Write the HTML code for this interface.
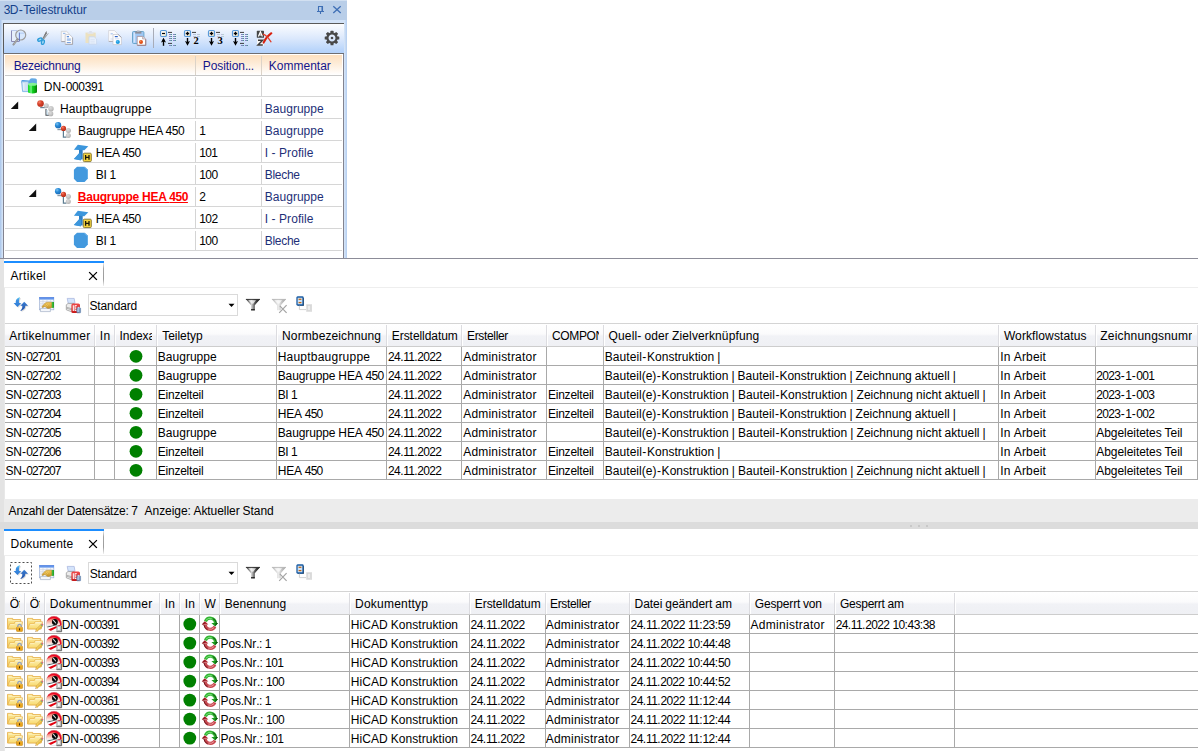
<!DOCTYPE html>
<html><head><meta charset="utf-8"><title>HiCAD</title>
<style>
html,body{margin:0;padding:0}
body{width:1198px;height:751px;position:relative;overflow:hidden;background:#fff;font-family:"Liberation Sans",sans-serif;font-size:12px;color:#000}
.r{position:absolute;display:block}
.t{position:absolute;display:block;white-space:pre;line-height:16px;height:16px;font-size:12px}
svg{position:absolute;display:block;overflow:visible}
.t i{font-style:normal}

</style></head>
<body>
<div class="r" style="left:0px;top:0px;width:347px;height:258px;background:#d3e3f8;"></div>
<div class="r" style="left:0px;top:0px;width:347px;height:20px;background:#b9cee8;"></div>
<div class="r" style="left:0px;top:0px;width:347px;height:1px;background:#d2e0f1;"></div>
<div class="r" style="left:0px;top:20px;width:3px;height:238px;background:linear-gradient(90deg,#a9c5ea,#d9e7f8);"></div>
<div class="r" style="left:344px;top:20px;width:3px;height:238px;background:linear-gradient(90deg,#d9e7f8,#b3cdf0);"></div>
<div class="r" style="left:3px;top:23px;width:341px;height:31px;background:linear-gradient(180deg,#ffffff 0%,#f4f8fe 15%,#dbe8fc 50%,#b7d4fb 90%,#b3d1fa 100%);"></div>
<div class="r" style="left:3px;top:23px;width:341px;height:1px;background:#5a5a5a;"></div>
<div class="r" style="left:3px;top:23px;width:1px;height:31px;background:#5a5a5a;"></div>
<div class="r" style="left:3px;top:53px;width:341px;height:1px;background:#6e6e72;"></div>
<div class="r" style="left:3px;top:54px;width:341px;height:204px;background:#ffffff;"></div>
<div class="r" style="left:3px;top:54px;width:1px;height:204px;background:#83838f;"></div>
<div class="r" style="left:343px;top:54px;width:1px;height:204px;background:#83838f;"></div>
<div class="r" style="left:5px;top:55px;width:337px;height:20px;background:linear-gradient(180deg,#fde0c0 0%,#fdebd6 40%,#fffaf5 85%,#ffffff 100%);"></div>
<div class="r" style="left:5px;top:75px;width:337px;height:1px;background:#c9c9c9;"></div>
<div class="r" style="left:5px;top:96px;width:337px;height:1px;background:#d6d6d6;"></div>
<div class="r" style="left:5px;top:118px;width:337px;height:1px;background:#d6d6d6;"></div>
<div class="r" style="left:5px;top:140px;width:337px;height:1px;background:#d6d6d6;"></div>
<div class="r" style="left:5px;top:162px;width:337px;height:1px;background:#d6d6d6;"></div>
<div class="r" style="left:5px;top:184px;width:337px;height:1px;background:#d6d6d6;"></div>
<div class="r" style="left:5px;top:206px;width:337px;height:1px;background:#d6d6d6;"></div>
<div class="r" style="left:5px;top:228px;width:337px;height:1px;background:#d6d6d6;"></div>
<div class="r" style="left:5px;top:250px;width:337px;height:1px;background:#d6d6d6;"></div>
<div class="r" style="left:195px;top:56px;width:1px;height:19px;background:#dcd3c8;"></div>
<div class="r" style="left:195px;top:77px;width:1px;height:19px;background:#d4d4d4;"></div>
<div class="r" style="left:195px;top:99px;width:1px;height:19px;background:#d4d4d4;"></div>
<div class="r" style="left:195px;top:121px;width:1px;height:19px;background:#d4d4d4;"></div>
<div class="r" style="left:195px;top:143px;width:1px;height:19px;background:#d4d4d4;"></div>
<div class="r" style="left:195px;top:165px;width:1px;height:19px;background:#d4d4d4;"></div>
<div class="r" style="left:195px;top:187px;width:1px;height:19px;background:#d4d4d4;"></div>
<div class="r" style="left:195px;top:209px;width:1px;height:19px;background:#d4d4d4;"></div>
<div class="r" style="left:195px;top:231px;width:1px;height:19px;background:#d4d4d4;"></div>
<div class="r" style="left:261px;top:56px;width:1px;height:19px;background:#dcd3c8;"></div>
<div class="r" style="left:261px;top:77px;width:1px;height:19px;background:#d4d4d4;"></div>
<div class="r" style="left:261px;top:99px;width:1px;height:19px;background:#d4d4d4;"></div>
<div class="r" style="left:261px;top:121px;width:1px;height:19px;background:#d4d4d4;"></div>
<div class="r" style="left:261px;top:143px;width:1px;height:19px;background:#d4d4d4;"></div>
<div class="r" style="left:261px;top:165px;width:1px;height:19px;background:#d4d4d4;"></div>
<div class="r" style="left:261px;top:187px;width:1px;height:19px;background:#d4d4d4;"></div>
<div class="r" style="left:261px;top:209px;width:1px;height:19px;background:#d4d4d4;"></div>
<div class="r" style="left:261px;top:231px;width:1px;height:19px;background:#d4d4d4;"></div>
<div class="r" style="left:0px;top:258px;width:1198px;height:1px;background:#8c8c98;"></div>
<div class="r" style="left:0px;top:259px;width:4px;height:492px;background:#e3e3e3;"></div>
<div class="r" style="left:4px;top:288px;width:1px;height:211px;background:#e8e8e8;"></div>
<div class="r" style="left:4px;top:556px;width:1px;height:195px;background:#e8e8e8;"></div>
<div class="r" style="left:4px;top:261px;width:100px;height:2px;background:#1c8dff;"></div>
<div class="r" style="left:103px;top:263px;width:1px;height:23px;background:linear-gradient(180deg,#e8e8e8 0%,#a4a4a4 25%,#9c9c9c 70%,#f0f0f0 100%);"></div>
<div class="r" style="left:4px;top:287px;width:1194px;height:1px;background:#eeeeee;"></div>
<div class="r" style="left:88px;top:294px;width:150px;height:22px;background:#fff;box-sizing:border-box;border:1px solid #dadada"></div>
<div class="r" style="left:5px;top:324px;width:1193px;height:22px;background:linear-gradient(180deg,#ffffff 0%,#fbfbfc 45%,#f1f2f6 55%,#eff0f4 100%);"></div>
<div class="r" style="left:5px;top:323px;width:1193px;height:1px;background:#d4d4d4;"></div>
<div class="r" style="left:5px;top:346px;width:1193px;height:1px;background:#cdcdcd;"></div>
<div class="r" style="left:94px;top:325px;width:1px;height:21px;background:#dcdce0;"></div>
<div class="r" style="left:95px;top:325px;width:1px;height:21px;background:#ffffff;"></div>
<div class="r" style="left:114px;top:325px;width:1px;height:21px;background:#dcdce0;"></div>
<div class="r" style="left:115px;top:325px;width:1px;height:21px;background:#ffffff;"></div>
<div class="r" style="left:156px;top:325px;width:1px;height:21px;background:#dcdce0;"></div>
<div class="r" style="left:157px;top:325px;width:1px;height:21px;background:#ffffff;"></div>
<div class="r" style="left:276px;top:325px;width:1px;height:21px;background:#dcdce0;"></div>
<div class="r" style="left:277px;top:325px;width:1px;height:21px;background:#ffffff;"></div>
<div class="r" style="left:386px;top:325px;width:1px;height:21px;background:#dcdce0;"></div>
<div class="r" style="left:387px;top:325px;width:1px;height:21px;background:#ffffff;"></div>
<div class="r" style="left:461px;top:325px;width:1px;height:21px;background:#dcdce0;"></div>
<div class="r" style="left:462px;top:325px;width:1px;height:21px;background:#ffffff;"></div>
<div class="r" style="left:546px;top:325px;width:1px;height:21px;background:#dcdce0;"></div>
<div class="r" style="left:547px;top:325px;width:1px;height:21px;background:#ffffff;"></div>
<div class="r" style="left:603px;top:325px;width:1px;height:21px;background:#dcdce0;"></div>
<div class="r" style="left:604px;top:325px;width:1px;height:21px;background:#ffffff;"></div>
<div class="r" style="left:998px;top:325px;width:1px;height:21px;background:#dcdce0;"></div>
<div class="r" style="left:999px;top:325px;width:1px;height:21px;background:#ffffff;"></div>
<div class="r" style="left:1095px;top:325px;width:1px;height:21px;background:#dcdce0;"></div>
<div class="r" style="left:1096px;top:325px;width:1px;height:21px;background:#ffffff;"></div>
<div class="r" style="left:1197px;top:325px;width:1px;height:21px;background:#dcdce0;"></div>
<div class="r" style="left:1198px;top:325px;width:1px;height:21px;background:#ffffff;"></div>
<div class="r" style="left:5px;top:365px;width:1193px;height:1px;background:#a9a9a9;"></div>
<div class="r" style="left:5px;top:384px;width:1193px;height:1px;background:#a9a9a9;"></div>
<div class="r" style="left:5px;top:403px;width:1193px;height:1px;background:#a9a9a9;"></div>
<div class="r" style="left:5px;top:422px;width:1193px;height:1px;background:#a9a9a9;"></div>
<div class="r" style="left:5px;top:441px;width:1193px;height:1px;background:#a9a9a9;"></div>
<div class="r" style="left:5px;top:460px;width:1193px;height:1px;background:#a9a9a9;"></div>
<div class="r" style="left:5px;top:479px;width:1193px;height:1px;background:#a9a9a9;"></div>
<div class="r" style="left:94px;top:347px;width:1px;height:133px;background:#a9a9a9;"></div>
<div class="r" style="left:114px;top:347px;width:1px;height:133px;background:#a9a9a9;"></div>
<div class="r" style="left:156px;top:347px;width:1px;height:133px;background:#a9a9a9;"></div>
<div class="r" style="left:276px;top:347px;width:1px;height:133px;background:#a9a9a9;"></div>
<div class="r" style="left:386px;top:347px;width:1px;height:133px;background:#a9a9a9;"></div>
<div class="r" style="left:461px;top:347px;width:1px;height:133px;background:#a9a9a9;"></div>
<div class="r" style="left:546px;top:347px;width:1px;height:133px;background:#a9a9a9;"></div>
<div class="r" style="left:603px;top:347px;width:1px;height:133px;background:#a9a9a9;"></div>
<div class="r" style="left:998px;top:347px;width:1px;height:133px;background:#a9a9a9;"></div>
<div class="r" style="left:1095px;top:347px;width:1px;height:133px;background:#a9a9a9;"></div>
<div class="r" style="left:1197px;top:347px;width:1px;height:133px;background:#a9a9a9;"></div>
<div class="r" style="left:4px;top:499px;width:1194px;height:23px;background:#ececec;"></div>
<div class="r" style="left:0px;top:522px;width:1198px;height:7px;background:#dcdcdc;"></div>
<div class="r" style="left:910px;top:524.5px;width:2px;height:2px;background:#c2c2c2;border-radius:1px"></div>
<div class="r" style="left:918px;top:524.5px;width:2px;height:2px;background:#c2c2c2;border-radius:1px"></div>
<div class="r" style="left:926px;top:524.5px;width:2px;height:2px;background:#c2c2c2;border-radius:1px"></div>
<div class="r" style="left:4px;top:529px;width:100px;height:2px;background:#1c8dff;"></div>
<div class="r" style="left:103px;top:531px;width:1px;height:23px;background:linear-gradient(180deg,#e8e8e8 0%,#a4a4a4 25%,#9c9c9c 70%,#f0f0f0 100%);"></div>
<div class="r" style="left:4px;top:555px;width:1194px;height:1px;background:#eeeeee;"></div>
<div class="r" style="left:88px;top:562px;width:150px;height:22px;background:#fff;box-sizing:border-box;border:1px solid #dadada"></div>
<div class="r" style="left:5px;top:592px;width:1193px;height:22px;background:linear-gradient(180deg,#ffffff 0%,#fbfbfc 45%,#f1f2f6 55%,#eff0f4 100%);"></div>
<div class="r" style="left:5px;top:591px;width:1193px;height:1px;background:#d4d4d4;"></div>
<div class="r" style="left:5px;top:614px;width:1193px;height:1px;background:#cdcdcd;"></div>
<div class="r" style="left:24px;top:593px;width:1px;height:21px;background:#dcdce0;"></div>
<div class="r" style="left:25px;top:593px;width:1px;height:21px;background:#ffffff;"></div>
<div class="r" style="left:44px;top:593px;width:1px;height:21px;background:#dcdce0;"></div>
<div class="r" style="left:45px;top:593px;width:1px;height:21px;background:#ffffff;"></div>
<div class="r" style="left:159px;top:593px;width:1px;height:21px;background:#dcdce0;"></div>
<div class="r" style="left:160px;top:593px;width:1px;height:21px;background:#ffffff;"></div>
<div class="r" style="left:179px;top:593px;width:1px;height:21px;background:#dcdce0;"></div>
<div class="r" style="left:180px;top:593px;width:1px;height:21px;background:#ffffff;"></div>
<div class="r" style="left:199px;top:593px;width:1px;height:21px;background:#dcdce0;"></div>
<div class="r" style="left:200px;top:593px;width:1px;height:21px;background:#ffffff;"></div>
<div class="r" style="left:219px;top:593px;width:1px;height:21px;background:#dcdce0;"></div>
<div class="r" style="left:220px;top:593px;width:1px;height:21px;background:#ffffff;"></div>
<div class="r" style="left:349px;top:593px;width:1px;height:21px;background:#dcdce0;"></div>
<div class="r" style="left:350px;top:593px;width:1px;height:21px;background:#ffffff;"></div>
<div class="r" style="left:469px;top:593px;width:1px;height:21px;background:#dcdce0;"></div>
<div class="r" style="left:470px;top:593px;width:1px;height:21px;background:#ffffff;"></div>
<div class="r" style="left:545px;top:593px;width:1px;height:21px;background:#dcdce0;"></div>
<div class="r" style="left:546px;top:593px;width:1px;height:21px;background:#ffffff;"></div>
<div class="r" style="left:629px;top:593px;width:1px;height:21px;background:#dcdce0;"></div>
<div class="r" style="left:630px;top:593px;width:1px;height:21px;background:#ffffff;"></div>
<div class="r" style="left:749px;top:593px;width:1px;height:21px;background:#dcdce0;"></div>
<div class="r" style="left:750px;top:593px;width:1px;height:21px;background:#ffffff;"></div>
<div class="r" style="left:834px;top:593px;width:1px;height:21px;background:#dcdce0;"></div>
<div class="r" style="left:835px;top:593px;width:1px;height:21px;background:#ffffff;"></div>
<div class="r" style="left:954px;top:593px;width:1px;height:21px;background:#dcdce0;"></div>
<div class="r" style="left:955px;top:593px;width:1px;height:21px;background:#ffffff;"></div>
<div class="r" style="left:5px;top:633px;width:1193px;height:1px;background:#a9a9a9;"></div>
<div class="r" style="left:5px;top:652px;width:1193px;height:1px;background:#a9a9a9;"></div>
<div class="r" style="left:5px;top:671px;width:1193px;height:1px;background:#a9a9a9;"></div>
<div class="r" style="left:5px;top:690px;width:1193px;height:1px;background:#a9a9a9;"></div>
<div class="r" style="left:5px;top:709px;width:1193px;height:1px;background:#a9a9a9;"></div>
<div class="r" style="left:5px;top:728px;width:1193px;height:1px;background:#a9a9a9;"></div>
<div class="r" style="left:5px;top:747px;width:1193px;height:1px;background:#a9a9a9;"></div>
<div class="r" style="left:24px;top:615px;width:1px;height:133px;background:#a9a9a9;"></div>
<div class="r" style="left:44px;top:615px;width:1px;height:133px;background:#a9a9a9;"></div>
<div class="r" style="left:159px;top:615px;width:1px;height:133px;background:#a9a9a9;"></div>
<div class="r" style="left:179px;top:615px;width:1px;height:133px;background:#a9a9a9;"></div>
<div class="r" style="left:199px;top:615px;width:1px;height:133px;background:#a9a9a9;"></div>
<div class="r" style="left:219px;top:615px;width:1px;height:133px;background:#a9a9a9;"></div>
<div class="r" style="left:349px;top:615px;width:1px;height:133px;background:#a9a9a9;"></div>
<div class="r" style="left:469px;top:615px;width:1px;height:133px;background:#a9a9a9;"></div>
<div class="r" style="left:545px;top:615px;width:1px;height:133px;background:#a9a9a9;"></div>
<div class="r" style="left:629px;top:615px;width:1px;height:133px;background:#a9a9a9;"></div>
<div class="r" style="left:749px;top:615px;width:1px;height:133px;background:#a9a9a9;"></div>
<div class="r" style="left:834px;top:615px;width:1px;height:133px;background:#a9a9a9;"></div>
<div class="r" style="left:954px;top:615px;width:1px;height:133px;background:#a9a9a9;"></div>
<svg width="1198" height="751" viewBox="0 0 1198 751" style="left:0;top:0"><defs>
<radialGradient id="gRed" cx="35%" cy="30%" r="70%"><stop offset="0" stop-color="#f4806a"/><stop offset=".45" stop-color="#d9442c"/><stop offset="1" stop-color="#b8301c"/></radialGradient>
<radialGradient id="gBlu" cx="35%" cy="30%" r="70%"><stop offset="0" stop-color="#7cc4f4"/><stop offset=".45" stop-color="#2a8cd8"/><stop offset="1" stop-color="#1a6cb8"/></radialGradient>
<radialGradient id="gGry" cx="40%" cy="35%" r="70%"><stop offset="0" stop-color="#dcdcdc"/><stop offset=".6" stop-color="#c4c4c4"/><stop offset="1" stop-color="#a8a8a8"/></radialGradient>
<linearGradient id="gCyl" x1="0" x2="1" y1="0" y2="0"><stop offset="0" stop-color="#22cc30"/><stop offset=".12" stop-color="#18e62c"/><stop offset=".36" stop-color="#7df08c"/><stop offset=".46" stop-color="#12d824"/><stop offset=".75" stop-color="#08ae10"/><stop offset="1" stop-color="#087808"/></linearGradient>
<linearGradient id="gFold" x1="0" x2="0" y1="0" y2="1"><stop offset="0" stop-color="#fdf1b4"/><stop offset="1" stop-color="#f8d96e"/></linearGradient>
<linearGradient id="gFoldB" x1="0" x2="0" y1="0" y2="1"><stop offset="0" stop-color="#fbe690"/><stop offset="1" stop-color="#f5cf62"/></linearGradient>
<linearGradient id="gFun" x1="0" x2="1" y1="0" y2="0"><stop offset="0" stop-color="#2a2a2a"/><stop offset=".4" stop-color="#d0d0d0"/><stop offset=".62" stop-color="#5a5a5a"/><stop offset="1" stop-color="#080808"/></linearGradient>
<linearGradient id="gFunG" x1="0" x2="1" y1="0" y2="0"><stop offset="0" stop-color="#b4b4b4"/><stop offset=".45" stop-color="#ececec"/><stop offset=".7" stop-color="#c4c4c4"/><stop offset="1" stop-color="#a0a0a0"/></linearGradient>
<linearGradient id="gHic" x1="0" x2="1" y1="0" y2="1"><stop offset="0" stop-color="#ff2a2a"/><stop offset=".35" stop-color="#f0191c"/><stop offset=".6" stop-color="#fbd0d0"/><stop offset=".8" stop-color="#ffffff"/><stop offset="1" stop-color="#e01018"/></linearGradient>

<g id="icDb">
<path d="M8 2.4 L9.4 0.7 Q9.9 0.2 10.8 0.2 L14.4 0.5 Q15.8 0.7 15.9 2 L15.9 6 L8 6 Z" fill="#62a8e4"/>
<path d="M0.3 3 Q0.4 2 1.6 2 L8.2 2.4 L8.2 5 L0.6 5 Z" fill="#4c9be2"/>
<path d="M0.6 3.6 L7.4 3.6 L7.4 13.6 L1.6 13.6 Z" fill="#cfe2f3" stroke="#7eb6e8" stroke-width="0.9"/>
<rect x="2.2" y="5" width="1.2" height="7" fill="#e6f0fa"/>
<path d="M7 6 L16 6 L16 14.6 Q11.5 16.6 7 14.6 Z" fill="url(#gCyl)"/>
<ellipse cx="11.5" cy="6.2" rx="4.5" ry="1.5" fill="#84f394"/>
</g>
<g id="icAsmM">
<path d="M3.2 7.6 H8.6" stroke="#6c8698" stroke-width="1.2" fill="none"/>
<path d="M9 9 V15.3 H12" stroke="#4a4f55" stroke-width="1.1" fill="none"/>
<path d="M10 10 V14.4 H12" stroke="#b4d2e4" stroke-width="1" fill="none"/>
<circle cx="9.3" cy="5.7" r="2.5" fill="url(#gGry)"/>
<circle cx="14" cy="8.7" r="2.7" fill="url(#gGry)"/>
<circle cx="13.7" cy="13.7" r="2.6" fill="url(#gGry)"/>
<circle cx="3.5" cy="3.5" r="3.35" fill="url(#gRed)"/>
</g>
<g id="icAsmS">
<path d="M2.4 7.5 H6.6" stroke="#8a9aa6" stroke-width="1.4" fill="none"/>
<path d="M8.4 9 V15.2 H11.4" stroke="#5e7e92" stroke-width="1.2" fill="none"/>
<circle cx="13.4" cy="8.4" r="2.5" fill="url(#gGry)"/>
<circle cx="13.3" cy="13.6" r="2.5" fill="url(#gGry)"/>
<circle cx="3.1" cy="3.2" r="3.15" fill="url(#gBlu)"/>
<circle cx="8.5" cy="6.4" r="2.6" fill="url(#gRed)"/>
</g>
<g id="icBeam">
<path d="M4.8 0.3 L15.3 1.9 L11.3 5.8 L0.9 5.3 Z" fill="#3c96dc"/>
<path d="M6 5.4 L9.7 5.6 L9.7 15 L6 15 Z" fill="#2f80c6"/>
<path d="M6.2 8.6 L6.2 15.6 L0.9 14.6 Z" fill="#3c96dc"/>
<path d="M0.9 14.6 L6.2 9.2 L8 9.2 L8 16 Z" fill="#3c96dc"/>
<rect x="10.3" y="8.8" width="8" height="8.4" rx="1" fill="#f2d23c" stroke="#8c7c36" stroke-width="1"/>
<path d="M12.6 10.7 V15.3 M16 10.7 V15.3 M12.6 13 H16" stroke="#1a1608" stroke-width="1.3" fill="none"/>
</g>
<g id="icSheet">
<path d="M4 0.7 L11.6 0.7 L14.9 3.8 L14.9 12.6 L11.6 15.9 L4 15.9 L0.9 12.8 L0.9 3.8 Z" fill="#4399de"/>
<path d="M11.6 0.7 L14.9 3.8 L14.9 12.6 L14 12.6 L14 4.2 L11 1.4Z" fill="#66aee8"/>
</g>
<g id="icTri"><path d="M7.8 0.2 L7.8 7.6 L0.4 7.6 Z" fill="#101010"/></g>

<linearGradient id="gDash" x1="0" x2="1" y1="0" y2="0"><stop offset="0" stop-color="#8e7ccc"/><stop offset=".5" stop-color="#7a8ab8"/><stop offset="1" stop-color="#3f9a84"/></linearGradient>
<linearGradient id="gDashF" x1="0" x2="1" y1="0" y2="0"><stop offset="0" stop-color="#c4bce4"/><stop offset="1" stop-color="#b4d4cc"/></linearGradient>
<linearGradient id="gBox" x1="0" x2="1" y1="0" y2="1"><stop offset="0" stop-color="#ffffff"/><stop offset=".7" stop-color="#f4f0e4"/><stop offset="1" stop-color="#e8dc70"/></linearGradient>

<g id="tbMag">
<path d="M0.4 0.4 H9 V11.4 H0.4 Z" fill="#e6effc" stroke="none"/>
<path d="M0.5 0.3 V11.5 H8.6" fill="none" stroke="#8a8ab4" stroke-width="1"/>
<path d="M0.5 0.5 H6" fill="none" stroke="#b8c8ec" stroke-width="1"/>
<circle cx="9.7" cy="5" r="5" fill="#d6e8fd" fill-opacity=".85" stroke="#9c9c9c" stroke-width="1.2"/>
<path d="M8.4 2.6 V11" stroke="#5468c0" stroke-width=".9" fill="none"/>
<path d="M8.9 3.2 H13" stroke="#a8c4f0" stroke-width=".8" fill="none"/>
<path d="M6.4 9.4 L2.4 14.6" stroke="#8c8c8c" stroke-width="1.9" stroke-linecap="round" fill="none"/>
<path d="M6.2 9.8 L2.6 14.4" stroke="#c4c4c4" stroke-width=".7" fill="none"/>
</g>
<g id="tbSci">
<path d="M10.3 0.2 L6 8 L7.1 8.7 L10.9 2.2 Z" fill="#808080"/>
<path d="M13 2 L7.6 9 L6.6 8 L11.8 2.4 Z" fill="#9c9c9c"/>
<path d="M10.5 0.5 L8.6 4.6" stroke="#6e6e6e" stroke-width=".6"/>
<ellipse cx="3.9" cy="8.6" rx="2.3" ry="1.4" transform="rotate(-22 3.9 8.6)" fill="#a8daf4" stroke="#2a9ad8" stroke-width="1.25"/>
<ellipse cx="6.9" cy="11.2" rx="1.4" ry="2.3" transform="rotate(14 6.9 11.2)" fill="#a8daf4" stroke="#2a9ad8" stroke-width="1.25"/>
</g>
<g id="tbCopy">
<path d="M0.3 0.3 H5.6 L8.2 2.8 V10.5 H0.3 Z" fill="#f7f7f9" stroke="#c8c8cc" stroke-width=".7"/>
<path d="M0.3 10.6 H8" stroke="#a4a4ac" stroke-width="1"/>
<path d="M2 2.4 H4.4" stroke="#8fb3e6" stroke-width="1"/>
<path d="M4.2 3.6 H8.6 L11.4 6.2 V13.3 H4.2 Z" fill="#fdfdfd" stroke="#bcbcc4" stroke-width=".7"/>
<path d="M4.4 13.4 H11.6 V6.6" stroke="#a8a8b0" stroke-width="1" fill="none"/>
<path d="M5.8 5.7 H8" stroke="#3e78d0" stroke-width="1.1"/>
<rect x="5.8" y="7.3" width="4" height="2.6" fill="#a9c5ee"/>
<path d="M5.8 11.6 H9.8" stroke="#6c98dc" stroke-width="1"/>
</g>
<g id="tbPasteD">
<rect x="0.5" y="1.6" width="10.2" height="10.4" fill="#ece1c0"/>
<path d="M2.6 1 H8.4 V2.8 H2.6 Z" fill="#e2e6ee"/>
<path d="M4.2 0.2 H6.8 V1.4 H4.2 Z" fill="#d8dce8"/>
<path d="M4 5.8 H9.2 L11.6 8 V13.3 H4 Z" fill="#e8f0fb" stroke="#c6d6ee" stroke-width=".8"/>
<path d="M5.4 8.4 H9.8 M5.4 10.2 H9.8 M5.4 12 H9.8" stroke="#d4e0f2" stroke-width=".7"/>
</g>
<g id="tbCopyB">
<path d="M0.6 0.5 H6.4 L9.2 3.2 V11.3 H0.6 Z" fill="#fafafc" stroke="#d0d0d6" stroke-width=".7"/>
<path d="M0.8 11.5 H5" stroke="#b0b0b8" stroke-width="1"/>
<path d="M2.6 3.8 H4.8" stroke="#a8c4ec" stroke-width="1.2"/>
<path d="M2.6 9 H4.8" stroke="#c8d8f0" stroke-width=".8"/>
<path d="M5 4.5 H10.2 L13.4 7.4 V14.6 H5 Z" fill="#ffffff" stroke="#c4c4cc" stroke-width=".7"/>
<path d="M10.2 4.5 L13.4 7.4" stroke="#a0a0a8" stroke-width="1"/>
<path d="M6.8 6.6 H9.8" stroke="#2f62c4" stroke-width="1.2"/>
<path d="M6.8 8.8 H11.4" stroke="#c0d4f0" stroke-width=".8"/>
<circle cx="9.8" cy="12" r="2.1" fill="#1c9ae0"/>
<circle cx="9.3" cy="11.4" r=".9" fill="#54bcf0"/>
</g>
<g id="tbPasteS">
<rect x="0.5" y="1.5" width="11.4" height="12" rx="1" fill="#a0c8f6" stroke="#6aa6cc" stroke-width="1"/>
<rect x="1.6" y="2.6" width="1.6" height="10" fill="#d4e6fb"/>
<path d="M3.2 1.4 H9.4 V3.6 H3.2 Z" fill="#8e8e98"/>
<path d="M5 0.2 H7.6 V1.6 H5 Z" fill="#c8c8d0"/>
<path d="M5.2 6.4 H10.6 L13.6 9 V15.2 H5.2 Z" fill="#ffffff" stroke="#a88c90" stroke-width=".8"/>
<path d="M5.4 15.4 H13.8 V9.4" stroke="#9c848c" stroke-width="1" fill="none"/>
<path d="M10.6 6.4 V9 H13.6" fill="#e8dcdc" stroke="#a88c90" stroke-width=".6"/>
<circle cx="9" cy="11.9" r="2" fill="#e2521a"/>
<circle cx="8.5" cy="11.3" r=".8" fill="#f58a50"/>
</g>
<g id="tbColl"><rect x="0.5" y="0.5" width="6" height="6" rx="1.2" fill="url(#gBox)" stroke="#5a9ada" stroke-width="1.2"/><path d="M2 3.5 H5" stroke="#000" stroke-width="1.2"/><path d="M3.5 15.8 V9.5" stroke="#000" stroke-width="1.4"/><path d="M3.5 7.8 L6 12.4 L3.5 11.4 L1 12.4 Z" fill="#000"/><path d="M8 2.4 H12 M8 13.4 H12" stroke="#3c3c3c" stroke-width="1"/><rect x="9" y="4" width="3" height="1" fill="url(#gDash)"/><rect x="13" y="4" width="3" height="1" fill="url(#gDash)"/><rect x="9" y="6" width="3" height="1" fill="url(#gDash)"/><rect x="13" y="6" width="3" height="1" fill="url(#gDash)"/><rect x="9" y="8" width="3" height="1" fill="url(#gDash)"/><rect x="13" y="8" width="3" height="1" fill="url(#gDash)"/><rect x="9" y="10" width="3" height="1" fill="url(#gDash)"/><rect x="13" y="10" width="3" height="1" fill="url(#gDash)"/><rect x="9" y="15" width="3" height="1" fill="url(#gDash)"/><rect x="13" y="15" width="3" height="1" fill="url(#gDash)"/></g>
<g id="tbExpA"><rect x="0.5" y="0.5" width="6" height="6" rx="1.2" fill="url(#gBox)" stroke="#5a9ada" stroke-width="1.2"/><path d="M1.8 3.5 H5.2 M3.5 1.8 V5.2" stroke="#000" stroke-width="1.3"/><path d="M3.5 8 V13.5" stroke="#000" stroke-width="1.4"/><path d="M3.5 15.8 L6 11 L3.5 12 L1 11 Z" fill="#000"/><path d="M8 2.4 H12 M8 13.4 H12" stroke="#3c3c3c" stroke-width="1"/><rect x="9" y="4" width="3" height="1" fill="url(#gDash)"/><rect x="13" y="4" width="3" height="1" fill="url(#gDash)"/><rect x="9" y="6" width="3" height="1" fill="url(#gDash)"/><rect x="13" y="6" width="3" height="1" fill="url(#gDash)"/><rect x="9" y="8" width="3" height="1" fill="url(#gDash)"/><rect x="13" y="8" width="3" height="1" fill="url(#gDash)"/><rect x="9" y="10" width="3" height="1" fill="url(#gDash)"/><rect x="13" y="10" width="3" height="1" fill="url(#gDash)"/><rect x="9" y="15" width="3" height="1" fill="url(#gDash)"/><rect x="13" y="15" width="3" height="1" fill="url(#gDash)"/></g>
<g id="tbExp2"><rect x="0.5" y="0.5" width="6" height="6" rx="1.2" fill="url(#gBox)" stroke="#5a9ada" stroke-width="1.2"/><path d="M1.8 3.5 H5.2 M3.5 1.8 V5.2" stroke="#000" stroke-width="1.3"/><path d="M3.5 8 V13.5" stroke="#000" stroke-width="1.4"/><path d="M3.5 15.8 L6 11 L3.5 12 L1 11 Z" fill="#000"/><path d="M8 2.4 H12" stroke="#3c3c3c" stroke-width="1"/><rect x="9" y="4" width="3" height="1" fill="url(#gDashF)"/><rect x="13" y="4" width="3" height="1" fill="url(#gDashF)"/><rect x="9" y="6" width="3" height="1" fill="url(#gDashF)"/><rect x="13" y="6" width="3" height="1" fill="url(#gDashF)"/><text x="9.4" y="14.2" font-family="Liberation Serif" font-weight="bold" font-size="10.5" fill="#000">2</text></g>
<g id="tbExp3"><rect x="0.5" y="0.5" width="6" height="6" rx="1.2" fill="url(#gBox)" stroke="#5a9ada" stroke-width="1.2"/><path d="M1.8 3.5 H5.2 M3.5 1.8 V5.2" stroke="#000" stroke-width="1.3"/><path d="M3.5 8 V13.5" stroke="#000" stroke-width="1.4"/><path d="M3.5 15.8 L6 11 L3.5 12 L1 11 Z" fill="#000"/><path d="M8 2.4 H12" stroke="#3c3c3c" stroke-width="1"/><rect x="9" y="4" width="3" height="1" fill="url(#gDashF)"/><rect x="13" y="4" width="3" height="1" fill="url(#gDashF)"/><rect x="9" y="6" width="3" height="1" fill="url(#gDashF)"/><rect x="13" y="6" width="3" height="1" fill="url(#gDashF)"/><text x="9.4" y="14.2" font-family="Liberation Serif" font-weight="bold" font-size="10.5" fill="#000">3</text></g>
<g id="tbAZ">
<rect x="0.8" y="0.8" width="7.2" height="7" rx=".6" fill="#454545"/>
<path d="M2.4 6.6 L4.4 1.8 L6.4 6.6 M3.2 5 H5.6" stroke="#fff" stroke-width="1.2" fill="none"/>
<rect x="1" y="9.2" width="6.8" height="6.8" fill="#f6f6f6"/>
<path d="M2 10.3 H6.6 L2 15 H6.8" stroke="#3c3c3c" stroke-width="1.5" fill="none"/>
<path d="M15.4 3.2 Q10.5 6.5 7.6 12.6" stroke="#d8200e" stroke-width="2" stroke-linecap="round" fill="none"/>
<path d="M7.2 4.2 Q11 5.6 15 11.8" stroke="#e0402c" stroke-width="1.3" stroke-linecap="round" fill="none"/>
</g>
<g id="tbGear"><g fill="#484848"><rect x="-1.5" y="-7.3" width="3" height="3.2" rx=".5" transform="rotate(0)"/><rect x="-1.5" y="-7.3" width="3" height="3.2" rx=".5" transform="rotate(45)"/><rect x="-1.5" y="-7.3" width="3" height="3.2" rx=".5" transform="rotate(90)"/><rect x="-1.5" y="-7.3" width="3" height="3.2" rx=".5" transform="rotate(135)"/><rect x="-1.5" y="-7.3" width="3" height="3.2" rx=".5" transform="rotate(180)"/><rect x="-1.5" y="-7.3" width="3" height="3.2" rx=".5" transform="rotate(225)"/><rect x="-1.5" y="-7.3" width="3" height="3.2" rx=".5" transform="rotate(270)"/><rect x="-1.5" y="-7.3" width="3" height="3.2" rx=".5" transform="rotate(315)"/></g><circle r="4.6" fill="none" stroke="#484848" stroke-width="2.2"/><circle r="1.3" fill="#484848"/></g>

<linearGradient id="gArrA" x1="0" x2="0" y1="0" y2="1"><stop offset="0" stop-color="#62ccf2"/><stop offset=".35" stop-color="#3a8ee2"/><stop offset="1" stop-color="#2f7ad4"/></linearGradient>
<linearGradient id="gArrB" x1="0" x2="0" y1="0" y2="1"><stop offset="0" stop-color="#3a80d6"/><stop offset="1" stop-color="#214fa4"/></linearGradient>
<linearGradient id="gWinT" x1="0" x2="0" y1="0" y2="1"><stop offset="0" stop-color="#4a7ee4"/><stop offset="1" stop-color="#7aa8f0"/></linearGradient>
<linearGradient id="gHand" x1="0" x2="0" y1="0" y2="1"><stop offset="0" stop-color="#f0c452"/><stop offset="1" stop-color="#c8962a"/></linearGradient>
<linearGradient id="gRedB" x1="0" x2="0" y1="0" y2="1"><stop offset="0" stop-color="#f04a4a"/><stop offset="1" stop-color="#c81818"/></linearGradient>
<linearGradient id="gHicBg" x1="0" x2="0" y1="0" y2="1"><stop offset="0" stop-color="#ee4438"/><stop offset=".25" stop-color="#f4897a"/><stop offset=".45" stop-color="#fbd0c8"/><stop offset=".62" stop-color="#ffffff"/></linearGradient>
<clipPath id="cpHic"><circle cx="8" cy="8" r="7.8"/></clipPath>

<g id="tlRef">
<path d="M6.6 0.2 C3.2 1.2 2.6 3.6 2.8 6 L0.6 6 L4.4 10 L8.2 6 L6 6 C5.8 4 6 2.2 7 0.6 Z" fill="#bdbdbd" fill-opacity=".55" transform="translate(.9 .8)"/>
<path d="M8 13.9 C11 12.8 12.4 10.8 12.3 8.8 L15 8.8 L11.2 4.7 L7.4 8.8 L9.3 8.8 C9.5 10.6 9 12.2 7.4 13.4 Z" fill="#bdbdbd" fill-opacity=".55" transform="translate(.9 .8)"/>
<path d="M6.6 0.2 C3.2 1.2 2.6 3.6 2.8 6 L0.6 6 L4.4 10 L8.2 6 L6 6 C5.8 4 6 2.2 7 0.6 Z" fill="url(#gArrA)"/>
<path d="M8 13.9 C11 12.8 12.4 10.8 12.3 8.8 L15 8.8 L11.2 4.7 L7.4 8.8 L9.3 8.8 C9.5 10.6 9 12.2 7.4 13.4 Z" fill="url(#gArrB)"/>
</g>
<g id="tlTab">
<rect x="0.4" y="0.4" width="14.4" height="12.4" fill="#f4f6fa" stroke="#9cb0d4" stroke-width=".7"/>
<rect x="0.2" y="0.2" width="14.8" height="2.5" fill="url(#gWinT)"/>
<path d="M0.6 4.6 H14.6 M0.6 6.8 H14.6 M0.6 9 H14.6 M4 3 V12.4 M8 3 V12.4 M11.6 3 V12.4" stroke="#d0d6e4" stroke-width=".7" fill="none"/>
<path d="M1.4 11.4 H11.4 V14.6 H1.4 Z" fill="#f4f6fa" stroke="#a4b0c6" stroke-width=".7"/>
<path d="M3 9.9 C3.4 8.6 5.6 6.4 7.2 5.4 C9 5 11 5.2 13 5.4 L13 10.4 C11.4 10.8 10 11.4 9 11.4 C8 11.2 7 10.4 6 9.4 C5 9.8 4 10.4 3.2 10.4 Z" fill="url(#gHand)" stroke="#b08428" stroke-width=".5"/>
<path d="M5.4 8 L7.6 9.8 M6.8 6.8 L9 8.8 M8.4 6 L10.4 7.8" stroke="#f4d88a" stroke-width=".5" fill="none"/>
<rect x="12.9" y="5" width="2" height="5.8" fill="#1aa01a"/>
<rect x="12.9" y="5" width=".8" height="5.8" fill="#4cc44c"/>
</g>
<g id="tlPrn">
<path d="M1.2 1 H8.2 L9 6 H2.2 Z" fill="#d4e4fb" stroke="#a4b0dc" stroke-width=".7"/>
<path d="M0.3 7.4 L2.2 6 H8 V14.4 L6 14.6 L0.3 12.4 Z" fill="#ececec" stroke="#929292" stroke-width=".7"/>
<path d="M0.5 9.8 L6 11.4 M0.5 10.8 L6 12.6" stroke="#9c9c9c" stroke-width=".7" fill="none"/>
<rect x="5.4" y="6" width="8.6" height="9.6" rx="1.6" fill="url(#gRedB)"/>
<path d="M7.3 7.8 V13.6" stroke="#fff" stroke-width="1.1" fill="none"/><path d="M9 7.9 V13.5 M9 8.3 H10.9 M9 10.7 H10.4 M9 13.1 H10.6" stroke="#fff" stroke-width=".9" fill="none"/>
<rect x="10.8" y="10.6" width="3.8" height="4.8" rx=".5" fill="#7d9cc4" stroke="#5878a4" stroke-width=".6"/>
<rect x="11.6" y="9.6" width="2" height="1.8" rx=".8" fill="#e8eef6" stroke="#8aa4c8" stroke-width=".5"/>
<rect x="11.6" y="11.6" width="1" height="3" fill="#c8d8ec"/>
</g>
<g id="tlFun">
<path d="M0.9 0.9 H15 L9.8 6.8 V11.9 H6 V6.8 Z" fill="url(#gFun)"/>
<path d="M3.4 1.9 H11 L8.2 5.4 H6.8 Z" fill="#f6f6f6" fill-opacity=".8"/>
<path d="M0.9 1 H15" stroke="#2a2a2a" stroke-width=".9"/>
<path d="M6 11.4 H9.8" stroke="#111" stroke-width="1.2"/>
</g>
<g id="tlFunX">
<path d="M0.9 0.9 H15 L9.8 6.8 V11.9 H6 V6.8 Z" fill="url(#gFunG)"/>
<path d="M3.4 1.9 H11 L8.2 5.4 H6.8 Z" fill="#fafafa" fill-opacity=".8"/>
<path d="M0.9 1 H15" stroke="#b4b4b4" stroke-width=".8"/>
<path d="M8.2 14.4 L15.6 6.8 M8.8 7.4 L15.6 14.4" stroke="#a4a4a4" stroke-width="1.2" fill="none"/>
</g>
<g id="tlSrv">
<rect x="1.8" y="1.8" width="6.2" height="8" fill="#4a4a4a"/>
<rect x="1" y="1" width="6" height="8" rx=".6" fill="#d0e2f4" stroke="#1a5ca4" stroke-width="1.3"/>
<rect x="2.6" y="2.7" width="2.8" height="1.2" fill="#c4660e"/>
<rect x="2.6" y="6" width="2.8" height="1.2" fill="#c4660e"/>
<path d="M3.4 9.8 V13.6 H10" stroke="#d2d2d2" stroke-width="1" fill="none"/>
<rect x="10.2" y="8.2" width="5.8" height="7.6" fill="#dcdcdc"/>
<rect x="11.4" y="9.4" width="3.2" height="5" fill="#ececec" stroke="#cfcfcf" stroke-width=".5"/>
</g>
<g id="rwFoldL">
<path d="M0.5 0.4 H5.7 V1.5 H13.7 V10.9 H0.5 Z" fill="url(#gFoldB)" stroke="#e6ae48" stroke-width=".8"/>
<path d="M1.4 1.4 H4.8 M1.4 2.6 H12.6" stroke="#fdf4c4" stroke-width=".7" fill="none"/>
<path d="M2.7 5.7 H7.2 L7.9 3.8 H15.5 L14.3 10.9 H0.7 Z" fill="url(#gFold)" stroke="#e8b450" stroke-width=".8"/>
<path d="M8.4 4.7 H14.6" stroke="#fffbe6" stroke-width=".8" fill="none"/>
<path d="M3.2 6.6 H7.4" stroke="#fff6d0" stroke-width=".7" fill="none"/>

<path d="M10.8 9.4 V8.2 A1.75 1.9 0 0 1 14.3 8.2 V9.4" fill="none" stroke="#92a2c4" stroke-width="1.3"/>
<rect x="9.5" y="9.2" width="6.1" height="4.2" rx=".6" fill="#eba51c" stroke="#c98a10" stroke-width=".6"/>
<path d="M10 9.7 H15" stroke="#f6c85a" stroke-width=".6"/>
<rect x="12.05" y="10.2" width="1" height="2.2" rx=".4" fill="#3a2a08"/>
</g>
<g id="rwFoldP">
<path d="M0.5 0.4 H5.7 V1.5 H13.7 V10.9 H0.5 Z" fill="url(#gFoldB)" stroke="#e6ae48" stroke-width=".8"/>
<path d="M1.4 1.4 H4.8 M1.4 2.6 H12.6" stroke="#fdf4c4" stroke-width=".7" fill="none"/>
<path d="M2.7 5.7 H7.2 L7.9 3.8 H15.5 L14.3 10.9 H0.7 Z" fill="url(#gFold)" stroke="#e8b450" stroke-width=".8"/>
<path d="M8.4 4.7 H14.6" stroke="#fffbe6" stroke-width=".8" fill="none"/>
<path d="M3.2 6.6 H7.4" stroke="#fff6d0" stroke-width=".7" fill="none"/>

<path d="M15 7 L9.2 12.8" stroke="#c99a34" stroke-width="2.6"/><path d="M15 7 L9.2 12.8" stroke="#f0c64a" stroke-width="1.7"/>
<path d="M14.6 6.8 L9 12.4" stroke="#fbe9a4" stroke-width=".7" stroke-dasharray="1 .8"/>
<path d="M15.8 6 L14.9 7" stroke="#e0687c" stroke-width="2"/>
<path d="M14.9 7 L14.3 7.7" stroke="#62aa84" stroke-width="2"/>
<path d="M9.4 12.3 L8 13.9 L10 13.2 Z" fill="#e8b080"/>
<path d="M8.7 13.2 L8 13.9 L9 13.6 Z" fill="#4a4038"/>
</g>
<g id="rwHic">
<g clip-path="url(#cpHic)">
<rect x="0" y="0" width="16" height="16" fill="url(#gHicBg)"/>
<path d="M0.8 5 A7.8 7.8 0 0 1 15.9 9.4 L14 9.7 A6.9 6.9 0 0 0 2.6 4 Z" fill="#ea0420"/>
<path d="M11.4 9.5 L16 8.3 V10 L11.6 10.8 Z" fill="#ea0a26"/>
<path d="M1.2 11 L11 8.7" stroke="#48585a" stroke-width="1" fill="none"/>
<path d="M1.3 9.9 L10 8" stroke="#dfe3e3" stroke-width=".8" fill="none"/>
<path d="M1.4 13.7 L10.7 9.9 L11.2 11.6 L3.2 15.7 Z" fill="#e2000e"/>
</g>
<circle cx="8" cy="8" r="7.7" fill="none" stroke="#c8bcbc" stroke-width=".5" stroke-opacity=".7"/>
<circle cx="8.9" cy="6" r="2.95" fill="#050505"/>
<path d="M7.5 4.4 L9.7 7" stroke="#d4e4e4" stroke-width="1.1" stroke-linecap="round"/>
<rect x="10.7" y="9.9" width="4.8" height="5.6" fill="#bcbcbc" stroke="#9a9a9a" stroke-width=".5"/>
<rect x="11.8" y="11" width="2" height="3" fill="#f4f4f4"/>
<path d="M15.6 10 V15.7 H10.6" stroke="#5e5e5e" stroke-width=".9" fill="none"/>
</g>
<g id="rwSync">
<path d="M6.4 7.4 A5.2 5.2 0 0 1 16.4 9" stroke="#2fb52f" stroke-width="3.1" fill="none"/>
<path d="M13.6 4.4 A6.4 6.4 0 0 1 17.4 8.8" stroke="#0c420c" stroke-width="1" fill="none" stroke-opacity=".85"/>
<path d="M6.8 6.2 A5.4 5.4 0 0 1 13.4 5" stroke="#86e086" stroke-width=".9" fill="none"/>
<path d="M12.4 8.9 L19 8.9 L16.1 12.5 Z" fill="#1d9a1d"/>
<path d="M16.6 8.9 L19 8.9 L16.1 12.5 Z" fill="#0e5c10"/>
<path d="M15.9 12.5 A5.2 5.2 0 0 1 6.1 10.8" stroke="#c8474f" stroke-width="3.1" fill="none"/>
<path d="M8.6 15.8 A6.5 6.5 0 0 1 4.9 11" stroke="#5c1218" stroke-width="1" fill="none" stroke-opacity=".85"/>
<path d="M15 13.6 A5.2 5.2 0 0 1 9.4 15" stroke="#e9a0a4" stroke-width=".9" fill="none"/>
<path d="M2.8 10.6 L9.3 10.6 L6 7.2 Z" fill="#b02a32"/>
<path d="M2.8 10.6 L5.4 10.6 L6 7.2 Z" fill="#8c161e"/>
</g></defs>
<use href="#icDb" x="21" y="78"/>
<use href="#icAsmM" x="37" y="100"/>
<use href="#icTri" x="10.4" y="101.4"/>
<use href="#icAsmS" x="55" y="122"/>
<use href="#icTri" x="28.4" y="123.4"/>
<use href="#icBeam" x="73" y="144.4"/>
<use href="#icSheet" x="73" y="166"/>
<use href="#icAsmS" x="55" y="188"/>
<use href="#icTri" x="28.4" y="189.4"/>
<use href="#icBeam" x="73" y="210.4"/>
<use href="#icSheet" x="73" y="232"/>
<use href="#tbMag" x="11" y="30"/>
<use href="#tbSci" x="36" y="31"/>
<use href="#tbCopy" x="61" y="31"/>
<use href="#tbPasteD" x="85" y="31"/>
<use href="#tbCopyB" x="108" y="30"/>
<use href="#tbPasteS" x="132" y="30"/>
<path d="M153.5 28 V48" stroke="#a8acb8" stroke-width="1" fill="none"/>
<use href="#tbColl" x="160" y="30"/>
<use href="#tbExp2" x="184" y="30"/>
<use href="#tbExp3" x="208" y="30"/>
<use href="#tbExpA" x="232" y="30"/>
<use href="#tbAZ" x="256" y="30"/>
<use href="#tbGear" x="332" y="38"/>
<path d="M318.5 6.5 V11.5 M322.5 6.5 V11.5 M318 6.5 H323 M317 11.5 H324 M320.5 11.5 V14" stroke="#3f6fb5" stroke-width="1.1" fill="none"/><rect x="321.5" y="6.5" width="1.4" height="5" fill="#3f6fb5"/>
<path d="M333.3 6.3 L340.7 13 M340.7 6.3 L333.3 13" stroke="#3f6fb5" stroke-width="1.3" fill="none"/>
<use href="#tlRef" x="13" y="297"/>
<use href="#tlTab" x="39" y="297"/>
<use href="#tlPrn" x="66" y="297.4"/>
<path d="M228.5 303.8 H234.5 L231.5 306.9 Z" fill="#000"/>
<use href="#tlFun" x="245" y="298.4"/>
<use href="#tlFunX" x="271" y="298.4"/>
<use href="#tlSrv" x="296" y="296"/>
<use href="#tlRef" x="13" y="565"/>
<use href="#tlTab" x="39" y="565"/>
<use href="#tlPrn" x="66" y="565.4"/>
<path d="M228.5 571.8 H234.5 L231.5 574.9 Z" fill="#000"/>
<use href="#tlFun" x="245" y="566.4"/>
<use href="#tlFunX" x="271" y="566.4"/>
<use href="#tlSrv" x="296" y="564"/>
<use href="#rwFoldL" x="7" y="618"/>
<use href="#rwFoldP" x="27" y="618"/>
<use href="#rwHic" x="46" y="616"/>
<circle cx="189.8" cy="624.1" r="6.4" fill="#008000"/>
<use href="#rwSync" x="199" y="614"/>
<use href="#rwFoldL" x="7" y="637"/>
<use href="#rwFoldP" x="27" y="637"/>
<use href="#rwHic" x="46" y="635"/>
<circle cx="189.8" cy="643.1" r="6.4" fill="#008000"/>
<use href="#rwSync" x="199" y="633"/>
<use href="#rwFoldL" x="7" y="656"/>
<use href="#rwFoldP" x="27" y="656"/>
<use href="#rwHic" x="46" y="654"/>
<circle cx="189.8" cy="662.1" r="6.4" fill="#008000"/>
<use href="#rwSync" x="199" y="652"/>
<use href="#rwFoldL" x="7" y="675"/>
<use href="#rwFoldP" x="27" y="675"/>
<use href="#rwHic" x="46" y="673"/>
<circle cx="189.8" cy="681.1" r="6.4" fill="#008000"/>
<use href="#rwSync" x="199" y="671"/>
<use href="#rwFoldL" x="7" y="694"/>
<use href="#rwFoldP" x="27" y="694"/>
<use href="#rwHic" x="46" y="692"/>
<circle cx="189.8" cy="700.1" r="6.4" fill="#008000"/>
<use href="#rwSync" x="199" y="690"/>
<use href="#rwFoldL" x="7" y="713"/>
<use href="#rwFoldP" x="27" y="713"/>
<use href="#rwHic" x="46" y="711"/>
<circle cx="189.8" cy="719.1" r="6.4" fill="#008000"/>
<use href="#rwSync" x="199" y="709"/>
<use href="#rwFoldL" x="7" y="732"/>
<use href="#rwFoldP" x="27" y="732"/>
<use href="#rwHic" x="46" y="730"/>
<circle cx="189.8" cy="738.1" r="6.4" fill="#008000"/>
<use href="#rwSync" x="199" y="728"/>
<circle cx="136" cy="356.3" r="6.4" fill="#008000"/>
<circle cx="136" cy="375.3" r="6.4" fill="#008000"/>
<circle cx="136" cy="394.3" r="6.4" fill="#008000"/>
<circle cx="136" cy="413.3" r="6.4" fill="#008000"/>
<circle cx="136" cy="432.3" r="6.4" fill="#008000"/>
<circle cx="136" cy="451.3" r="6.4" fill="#008000"/>
<circle cx="136" cy="470.3" r="6.4" fill="#008000"/>
<path d="M89.5 272.5 L96.5 279.5 M96.5 272.5 L89.5 279.5" stroke="#000" stroke-width="1.15" stroke-linecap="square" fill="none"/>
<path d="M89.5 540.5 L96.5 547.5 M96.5 540.5 L89.5 547.5" stroke="#000" stroke-width="1.15" stroke-linecap="square" fill="none"/>
<rect x="10.5" y="562.5" width="21" height="21" fill="none" stroke="#4e4e4e" stroke-width="1" stroke-dasharray="2 2"/></svg>
<span class="t" style="left:3.7px;top:1.7px;color:#15428b;letter-spacing:-0.08px;"><i style="letter-spacing:-0.75px">3</i><i style="letter-spacing:0.42px">D-</i>Teilestruktur</span>
<span class="t" style="left:13.7px;top:57.6px;color:#15158a;letter-spacing:-0.24px;">Bezeichnung</span>
<span class="t" style="left:202.7px;top:57.6px;color:#15158a;letter-spacing:-0.06px;">Position<i style="letter-spacing:-0.39px">...</i></span>
<span class="t" style="left:268.7px;top:57.6px;color:#15158a;letter-spacing:0.02px;">Kommentar</span>
<span class="t" style="left:43.8px;top:79.4px;color:#000;letter-spacing:-0.09px;">D<i style="letter-spacing:0.31px">N-</i><i style="letter-spacing:-0.34px">000391</i></span>
<span class="t" style="left:59.9px;top:101.3px;color:#000;letter-spacing:0.18px;">Hauptbaugruppe</span>
<span class="t" style="left:78.1px;top:123.3px;color:#000;letter-spacing:-0.14px;">Baugruppe HEA <i style="letter-spacing:-0.39px">450</i></span>
<span class="t" style="left:95.8px;top:145.3px;color:#000;letter-spacing:-0.25px;">HEA <i style="letter-spacing:-0.50px">450</i></span>
<span class="t" style="left:95.8px;top:167.3px;color:#000;letter-spacing:-0.32px;">BI <i style="letter-spacing:-0.57px">1</i></span>
<span class="t" style="left:77.8px;top:189.3px;color:#ff0000;letter-spacing:-0.24px;font-weight:bold;text-decoration:underline;text-decoration-skip-ink:none;">Baugruppe HEA <i style="letter-spacing:-0.49px">450</i></span>
<span class="t" style="left:95.8px;top:211.3px;color:#000;letter-spacing:-0.25px;">HEA <i style="letter-spacing:-0.50px">450</i></span>
<span class="t" style="left:95.8px;top:233.3px;color:#000;letter-spacing:-0.32px;">BI <i style="letter-spacing:-0.57px">1</i></span>
<span class="t" style="left:199.3px;top:123.3px;color:#000;"><i style="letter-spacing:-0.25px">1</i></span>
<span class="t" style="left:199.3px;top:145.3px;color:#000;letter-spacing:-0.47px;"><i style="letter-spacing:-0.72px">101</i></span>
<span class="t" style="left:199.3px;top:167.3px;color:#000;letter-spacing:-0.37px;"><i style="letter-spacing:-0.62px">100</i></span>
<span class="t" style="left:199.3px;top:189.3px;color:#000;"><i style="letter-spacing:-0.25px">2</i></span>
<span class="t" style="left:199.3px;top:211.3px;color:#000;letter-spacing:-0.37px;"><i style="letter-spacing:-0.62px">102</i></span>
<span class="t" style="left:199.3px;top:233.3px;color:#000;letter-spacing:-0.37px;"><i style="letter-spacing:-0.62px">100</i></span>
<span class="t" style="left:264.8px;top:101.3px;color:#1e2f78;letter-spacing:0.02px;">Baugruppe</span>
<span class="t" style="left:264.8px;top:123.3px;color:#1e2f78;letter-spacing:0.02px;">Baugruppe</span>
<span class="t" style="left:264.8px;top:145.3px;color:#1e2f78;letter-spacing:0.06px;">I - Profile</span>
<span class="t" style="left:264.8px;top:167.3px;color:#1e2f78;letter-spacing:-0.30px;">Bleche</span>
<span class="t" style="left:264.8px;top:189.3px;color:#1e2f78;letter-spacing:0.02px;">Baugruppe</span>
<span class="t" style="left:264.8px;top:211.3px;color:#1e2f78;letter-spacing:0.06px;">I - Profile</span>
<span class="t" style="left:264.8px;top:233.3px;color:#1e2f78;letter-spacing:-0.30px;">Bleche</span>
<span class="t" style="left:10.4px;top:268.2px;color:#000;letter-spacing:0.31px;">Artikel</span>
<span class="t" style="left:89.5px;top:297.8px;color:#000;letter-spacing:-0.14px;">Standard</span>
<span class="t" style="left:9.3px;top:328.0px;color:#000;letter-spacing:0.29px;">Artikelnummer</span>
<span class="t" style="left:99.8px;top:328.0px;color:#000;letter-spacing:0.28px;">In</span>
<span class="t" style="left:119.6px;top:328.0px;color:#000;letter-spacing:-0.09px;width:32.1px;overflow:hidden;">Indexa</span>
<span class="t" style="left:162.2px;top:328.0px;color:#000;letter-spacing:-0.04px;">Teiletyp</span>
<span class="t" style="left:282.1px;top:328.0px;color:#000;letter-spacing:0.11px;">Normbezeichnung</span>
<span class="t" style="left:391.8px;top:328.0px;color:#000;letter-spacing:-0.06px;">Erstelldatum</span>
<span class="t" style="left:467.0px;top:328.0px;color:#000;letter-spacing:-0.34px;">Ersteller</span>
<span class="t" style="left:552.1px;top:328.0px;color:#000;letter-spacing:-0.40px;width:47.2px;overflow:hidden;">COMPON</span>
<span class="t" style="left:608.6px;top:328.0px;color:#000;letter-spacing:0.12px;">Quell-<i style="letter-spacing:-0.21px"> </i>oder<i style="letter-spacing:-0.21px"> </i>Zielverknüpfung</span>
<span class="t" style="left:1003.9px;top:328.0px;color:#000;letter-spacing:0.11px;">Workflowstatus</span>
<span class="t" style="left:1100.3px;top:328.0px;color:#000;letter-spacing:0.19px;width:91.9px;overflow:hidden;">Zeichnungsnumm</span>
<span class="t" style="left:5.5px;top:348.5px;color:#000;letter-spacing:-0.30px;">S<i style="letter-spacing:0.20px">N-</i><i style="letter-spacing:-0.97px">027201</i></span>
<span class="t" style="left:157.8px;top:348.5px;color:#000;letter-spacing:0.02px;">Baugruppe</span>
<span class="t" style="left:277.7px;top:348.5px;color:#000;letter-spacing:0.22px;">Hauptbaugruppe</span>
<span class="t" style="left:388.1px;top:348.5px;color:#000;letter-spacing:0.01px;"><i style="letter-spacing:-0.66px">24</i><i style="letter-spacing:-0.32px">.</i><i style="letter-spacing:-0.66px">11</i><i style="letter-spacing:-0.32px">.</i><i style="letter-spacing:-0.66px">2022</i></span>
<span class="t" style="left:463.2px;top:348.5px;color:#000;letter-spacing:0.21px;">Administrator</span>
<span class="t" style="left:604.8px;top:348.5px;color:#000;letter-spacing:0.05px;">Bautei<i style="letter-spacing:0.55px">l-</i>Konstruktion<i style="letter-spacing:-0.28px"> </i>|</span>
<span class="t" style="left:1000.2px;top:348.5px;color:#000;letter-spacing:0.17px;">In<i style="letter-spacing:-0.16px"> </i>Arbeit</span>
<span class="t" style="left:5.5px;top:367.5px;color:#000;letter-spacing:-0.30px;">S<i style="letter-spacing:0.20px">N-</i><i style="letter-spacing:-0.97px">027202</i></span>
<span class="t" style="left:157.8px;top:367.5px;color:#000;letter-spacing:0.02px;">Baugruppe</span>
<span class="t" style="left:277.7px;top:367.5px;color:#000;letter-spacing:-0.11px;">Baugruppe<i style="letter-spacing:-0.44px"> </i>HEA<i style="letter-spacing:-0.44px"> </i><i style="letter-spacing:-0.78px">450</i></span>
<span class="t" style="left:388.1px;top:367.5px;color:#000;letter-spacing:0.01px;"><i style="letter-spacing:-0.66px">24</i><i style="letter-spacing:-0.32px">.</i><i style="letter-spacing:-0.66px">11</i><i style="letter-spacing:-0.32px">.</i><i style="letter-spacing:-0.66px">2022</i></span>
<span class="t" style="left:463.2px;top:367.5px;color:#000;letter-spacing:0.21px;">Administrator</span>
<span class="t" style="left:604.8px;top:367.5px;color:#000;letter-spacing:0.02px;">Bauteil(e<i style="letter-spacing:0.52px">)-</i>Konstruktion<i style="letter-spacing:-0.31px"> </i>|<i style="letter-spacing:-0.31px"> </i>Bautei<i style="letter-spacing:0.52px">l-</i>Konstruktion<i style="letter-spacing:-0.31px"> </i>|<i style="letter-spacing:-0.31px"> </i>Zeichnung<i style="letter-spacing:-0.31px"> </i>aktuell<i style="letter-spacing:-0.31px"> </i>|</span>
<span class="t" style="left:1000.2px;top:367.5px;color:#000;letter-spacing:0.17px;">In<i style="letter-spacing:-0.16px"> </i>Arbeit</span>
<span class="t" style="left:1096.3px;top:367.5px;color:#000;letter-spacing:-0.02px;"><i style="letter-spacing:-0.69px">202</i><i style="letter-spacing:-0.19px">3</i><i style="letter-spacing:0.48px">-</i><i style="letter-spacing:-0.19px">1</i><i style="letter-spacing:0.48px">-</i><i style="letter-spacing:-0.69px">001</i></span>
<span class="t" style="left:5.5px;top:386.5px;color:#000;letter-spacing:-0.30px;">S<i style="letter-spacing:0.20px">N-</i><i style="letter-spacing:-0.97px">027203</i></span>
<span class="t" style="left:157.8px;top:386.5px;color:#000;letter-spacing:-0.24px;">Einzelteil</span>
<span class="t" style="left:277.7px;top:386.5px;color:#000;letter-spacing:-0.38px;">BI<i style="letter-spacing:-0.71px"> </i><i style="letter-spacing:-1.05px">1</i></span>
<span class="t" style="left:388.1px;top:386.5px;color:#000;letter-spacing:0.01px;"><i style="letter-spacing:-0.66px">24</i><i style="letter-spacing:-0.32px">.</i><i style="letter-spacing:-0.66px">11</i><i style="letter-spacing:-0.32px">.</i><i style="letter-spacing:-0.66px">2022</i></span>
<span class="t" style="left:463.2px;top:386.5px;color:#000;letter-spacing:0.21px;">Administrator</span>
<span class="t" style="left:547.9px;top:386.5px;color:#000;letter-spacing:-0.21px;">Einzelteil</span>
<span class="t" style="left:604.8px;top:386.5px;color:#000;letter-spacing:0.04px;">Bauteil(e<i style="letter-spacing:0.54px">)-</i>Konstruktion<i style="letter-spacing:-0.29px"> </i>|<i style="letter-spacing:-0.29px"> </i>Bautei<i style="letter-spacing:0.54px">l-</i>Konstruktion<i style="letter-spacing:-0.29px"> </i>|<i style="letter-spacing:-0.29px"> </i>Zeichnung<i style="letter-spacing:-0.29px"> </i>nicht<i style="letter-spacing:-0.29px"> </i>aktuell<i style="letter-spacing:-0.29px"> </i>|</span>
<span class="t" style="left:1000.2px;top:386.5px;color:#000;letter-spacing:0.17px;">In<i style="letter-spacing:-0.16px"> </i>Arbeit</span>
<span class="t" style="left:1096.3px;top:386.5px;color:#000;"><i style="letter-spacing:-0.67px">202</i><i style="letter-spacing:-0.17px">3</i><i style="letter-spacing:0.50px">-</i><i style="letter-spacing:-0.17px">1</i><i style="letter-spacing:0.50px">-</i><i style="letter-spacing:-0.67px">003</i></span>
<span class="t" style="left:5.5px;top:405.5px;color:#000;letter-spacing:-0.30px;">S<i style="letter-spacing:0.20px">N-</i><i style="letter-spacing:-0.97px">027204</i></span>
<span class="t" style="left:157.8px;top:405.5px;color:#000;letter-spacing:-0.24px;">Einzelteil</span>
<span class="t" style="left:277.7px;top:405.5px;color:#000;letter-spacing:-0.15px;">HEA<i style="letter-spacing:-0.48px"> </i><i style="letter-spacing:-0.82px">450</i></span>
<span class="t" style="left:388.1px;top:405.5px;color:#000;letter-spacing:0.01px;"><i style="letter-spacing:-0.66px">24</i><i style="letter-spacing:-0.32px">.</i><i style="letter-spacing:-0.66px">11</i><i style="letter-spacing:-0.32px">.</i><i style="letter-spacing:-0.66px">2022</i></span>
<span class="t" style="left:463.2px;top:405.5px;color:#000;letter-spacing:0.21px;">Administrator</span>
<span class="t" style="left:547.9px;top:405.5px;color:#000;letter-spacing:-0.21px;">Einzelteil</span>
<span class="t" style="left:604.8px;top:405.5px;color:#000;letter-spacing:0.02px;">Bauteil(e<i style="letter-spacing:0.52px">)-</i>Konstruktion<i style="letter-spacing:-0.31px"> </i>|<i style="letter-spacing:-0.31px"> </i>Bautei<i style="letter-spacing:0.52px">l-</i>Konstruktion<i style="letter-spacing:-0.31px"> </i>|<i style="letter-spacing:-0.31px"> </i>Zeichnung<i style="letter-spacing:-0.31px"> </i>aktuell<i style="letter-spacing:-0.31px"> </i>|</span>
<span class="t" style="left:1000.2px;top:405.5px;color:#000;letter-spacing:0.17px;">In<i style="letter-spacing:-0.16px"> </i>Arbeit</span>
<span class="t" style="left:1096.3px;top:405.5px;color:#000;"><i style="letter-spacing:-0.67px">202</i><i style="letter-spacing:-0.17px">3</i><i style="letter-spacing:0.50px">-</i><i style="letter-spacing:-0.17px">1</i><i style="letter-spacing:0.50px">-</i><i style="letter-spacing:-0.67px">002</i></span>
<span class="t" style="left:5.5px;top:424.5px;color:#000;letter-spacing:-0.30px;">S<i style="letter-spacing:0.20px">N-</i><i style="letter-spacing:-0.97px">027205</i></span>
<span class="t" style="left:157.8px;top:424.5px;color:#000;letter-spacing:0.02px;">Baugruppe</span>
<span class="t" style="left:277.7px;top:424.5px;color:#000;letter-spacing:-0.11px;">Baugruppe<i style="letter-spacing:-0.44px"> </i>HEA<i style="letter-spacing:-0.44px"> </i><i style="letter-spacing:-0.78px">450</i></span>
<span class="t" style="left:388.1px;top:424.5px;color:#000;letter-spacing:0.01px;"><i style="letter-spacing:-0.66px">24</i><i style="letter-spacing:-0.32px">.</i><i style="letter-spacing:-0.66px">11</i><i style="letter-spacing:-0.32px">.</i><i style="letter-spacing:-0.66px">2022</i></span>
<span class="t" style="left:463.2px;top:424.5px;color:#000;letter-spacing:0.21px;">Administrator</span>
<span class="t" style="left:604.8px;top:424.5px;color:#000;letter-spacing:0.04px;">Bauteil(e<i style="letter-spacing:0.54px">)-</i>Konstruktion<i style="letter-spacing:-0.29px"> </i>|<i style="letter-spacing:-0.29px"> </i>Bautei<i style="letter-spacing:0.54px">l-</i>Konstruktion<i style="letter-spacing:-0.29px"> </i>|<i style="letter-spacing:-0.29px"> </i>Zeichnung<i style="letter-spacing:-0.29px"> </i>nicht<i style="letter-spacing:-0.29px"> </i>aktuell<i style="letter-spacing:-0.29px"> </i>|</span>
<span class="t" style="left:1000.2px;top:424.5px;color:#000;letter-spacing:0.17px;">In<i style="letter-spacing:-0.16px"> </i>Arbeit</span>
<span class="t" style="left:1096.3px;top:424.5px;color:#000;letter-spacing:-0.06px;">Abgeleitetes<i style="letter-spacing:-0.39px"> </i>Teil</span>
<span class="t" style="left:5.5px;top:443.5px;color:#000;letter-spacing:-0.30px;">S<i style="letter-spacing:0.20px">N-</i><i style="letter-spacing:-0.97px">027206</i></span>
<span class="t" style="left:157.8px;top:443.5px;color:#000;letter-spacing:-0.24px;">Einzelteil</span>
<span class="t" style="left:277.7px;top:443.5px;color:#000;letter-spacing:-0.38px;">BI<i style="letter-spacing:-0.71px"> </i><i style="letter-spacing:-1.05px">1</i></span>
<span class="t" style="left:388.1px;top:443.5px;color:#000;letter-spacing:0.01px;"><i style="letter-spacing:-0.66px">24</i><i style="letter-spacing:-0.32px">.</i><i style="letter-spacing:-0.66px">11</i><i style="letter-spacing:-0.32px">.</i><i style="letter-spacing:-0.66px">2022</i></span>
<span class="t" style="left:463.2px;top:443.5px;color:#000;letter-spacing:0.21px;">Administrator</span>
<span class="t" style="left:547.9px;top:443.5px;color:#000;letter-spacing:-0.21px;">Einzelteil</span>
<span class="t" style="left:604.8px;top:443.5px;color:#000;letter-spacing:0.05px;">Bautei<i style="letter-spacing:0.55px">l-</i>Konstruktion<i style="letter-spacing:-0.28px"> </i>|</span>
<span class="t" style="left:1000.2px;top:443.5px;color:#000;letter-spacing:0.17px;">In<i style="letter-spacing:-0.16px"> </i>Arbeit</span>
<span class="t" style="left:1096.3px;top:443.5px;color:#000;letter-spacing:-0.06px;">Abgeleitetes<i style="letter-spacing:-0.39px"> </i>Teil</span>
<span class="t" style="left:5.5px;top:462.5px;color:#000;letter-spacing:-0.30px;">S<i style="letter-spacing:0.20px">N-</i><i style="letter-spacing:-0.97px">027207</i></span>
<span class="t" style="left:157.8px;top:462.5px;color:#000;letter-spacing:-0.24px;">Einzelteil</span>
<span class="t" style="left:277.7px;top:462.5px;color:#000;letter-spacing:-0.15px;">HEA<i style="letter-spacing:-0.48px"> </i><i style="letter-spacing:-0.82px">450</i></span>
<span class="t" style="left:388.1px;top:462.5px;color:#000;letter-spacing:0.01px;"><i style="letter-spacing:-0.66px">24</i><i style="letter-spacing:-0.32px">.</i><i style="letter-spacing:-0.66px">11</i><i style="letter-spacing:-0.32px">.</i><i style="letter-spacing:-0.66px">2022</i></span>
<span class="t" style="left:463.2px;top:462.5px;color:#000;letter-spacing:0.21px;">Administrator</span>
<span class="t" style="left:547.9px;top:462.5px;color:#000;letter-spacing:-0.21px;">Einzelteil</span>
<span class="t" style="left:604.8px;top:462.5px;color:#000;letter-spacing:0.04px;">Bauteil(e<i style="letter-spacing:0.54px">)-</i>Konstruktion<i style="letter-spacing:-0.29px"> </i>|<i style="letter-spacing:-0.29px"> </i>Bautei<i style="letter-spacing:0.54px">l-</i>Konstruktion<i style="letter-spacing:-0.29px"> </i>|<i style="letter-spacing:-0.29px"> </i>Zeichnung<i style="letter-spacing:-0.29px"> </i>nicht<i style="letter-spacing:-0.29px"> </i>aktuell<i style="letter-spacing:-0.29px"> </i>|</span>
<span class="t" style="left:1000.2px;top:462.5px;color:#000;letter-spacing:0.17px;">In<i style="letter-spacing:-0.16px"> </i>Arbeit</span>
<span class="t" style="left:1096.3px;top:462.5px;color:#000;letter-spacing:-0.06px;">Abgeleitetes<i style="letter-spacing:-0.39px"> </i>Teil</span>
<span class="t" style="left:8.6px;top:502.8px;color:#000;letter-spacing:-0.18px;">Anzahl<i style="letter-spacing:-0.51px"> </i>der<i style="letter-spacing:-0.51px"> </i>Datensätze<i style="letter-spacing:-0.51px">: </i><i style="letter-spacing:-0.85px">7</i></span>
<span class="t" style="left:144.6px;top:502.8px;color:#000;letter-spacing:-0.06px;">Anzeige<i style="letter-spacing:-0.39px">: </i>Aktueller<i style="letter-spacing:-0.39px"> </i>Stand</span>
<span class="t" style="left:10.6px;top:536.2px;color:#000;letter-spacing:0.15px;">Dokumente</span>
<span class="t" style="left:89.8px;top:565.8px;color:#000;letter-spacing:-0.21px;">Standard</span>
<span class="t" style="left:9.7px;top:596.0px;color:#000;width:10.4px;overflow:hidden;">Öf</span>
<span class="t" style="left:29.7px;top:596.0px;color:#000;width:10.4px;overflow:hidden;">Öf</span>
<span class="t" style="left:49.8px;top:596.0px;color:#000;letter-spacing:0.28px;">Dokumentnummer</span>
<span class="t" style="left:164.8px;top:596.0px;color:#000;letter-spacing:0.08px;">In</span>
<span class="t" style="left:184.8px;top:596.0px;color:#000;letter-spacing:0.08px;">In</span>
<span class="t" style="left:204.4px;top:596.0px;color:#000;">W</span>
<span class="t" style="left:224.8px;top:596.0px;color:#000;">Benennung</span>
<span class="t" style="left:355.0px;top:596.0px;color:#000;letter-spacing:0.23px;">Dokumenttyp</span>
<span class="t" style="left:474.8px;top:596.0px;color:#000;letter-spacing:-0.07px;">Erstelldatum</span>
<span class="t" style="left:550.0px;top:596.0px;color:#000;letter-spacing:-0.34px;">Ersteller</span>
<span class="t" style="left:634.6px;top:596.0px;color:#000;letter-spacing:-0.05px;">Datei<i style="letter-spacing:-0.38px"> </i>geändert<i style="letter-spacing:-0.38px"> </i>am</span>
<span class="t" style="left:754.8px;top:596.0px;color:#000;letter-spacing:-0.17px;">Gesperrt<i style="letter-spacing:-0.50px"> </i>von</span>
<span class="t" style="left:840.0px;top:596.0px;color:#000;letter-spacing:-0.25px;">Gesperrt<i style="letter-spacing:-0.58px"> </i>am</span>
<span class="t" style="left:61.8px;top:616.5px;color:#000;letter-spacing:-0.13px;">D<i style="letter-spacing:0.37px">N-</i><i style="letter-spacing:-0.80px">000391</i></span>
<span class="t" style="left:350.8px;top:616.5px;color:#000;letter-spacing:0.05px;">HiCAD<i style="letter-spacing:-0.28px"> </i>Konstruktion</span>
<span class="t" style="left:470.6px;top:616.5px;color:#000;letter-spacing:0.09px;"><i style="letter-spacing:-0.58px">24</i><i style="letter-spacing:-0.24px">.</i><i style="letter-spacing:-0.58px">11</i><i style="letter-spacing:-0.24px">.</i><i style="letter-spacing:-0.58px">2022</i></span>
<span class="t" style="left:545.7px;top:616.5px;color:#000;letter-spacing:0.23px;">Administrator</span>
<span class="t" style="left:630.6px;top:616.5px;color:#000;letter-spacing:0.11px;"><i style="letter-spacing:-0.56px">24</i><i style="letter-spacing:-0.22px">.</i><i style="letter-spacing:-0.56px">11</i><i style="letter-spacing:-0.22px">.</i><i style="letter-spacing:-0.56px">2022</i><i style="letter-spacing:-0.22px"> </i><i style="letter-spacing:-0.56px">11</i><i style="letter-spacing:-0.22px">:</i><i style="letter-spacing:-0.56px">23</i><i style="letter-spacing:-0.22px">:</i><i style="letter-spacing:-0.56px">59</i></span>
<span class="t" style="left:750.6px;top:616.5px;color:#000;letter-spacing:0.27px;">Administrator</span>
<span class="t" style="left:835.7px;top:616.5px;color:#000;letter-spacing:0.05px;"><i style="letter-spacing:-0.62px">24</i><i style="letter-spacing:-0.28px">.</i><i style="letter-spacing:-0.62px">11</i><i style="letter-spacing:-0.28px">.</i><i style="letter-spacing:-0.62px">2022</i><i style="letter-spacing:-0.28px"> </i><i style="letter-spacing:-0.62px">10</i><i style="letter-spacing:-0.28px">:</i><i style="letter-spacing:-0.62px">43</i><i style="letter-spacing:-0.28px">:</i><i style="letter-spacing:-0.62px">38</i></span>
<span class="t" style="left:61.8px;top:635.5px;color:#000;letter-spacing:-0.13px;">D<i style="letter-spacing:0.37px">N-</i><i style="letter-spacing:-0.80px">000392</i></span>
<span class="t" style="left:220.6px;top:635.5px;color:#000;letter-spacing:-0.14px;">Pos<i style="letter-spacing:-0.47px">.</i>Nr<i style="letter-spacing:-0.47px">.: </i><i style="letter-spacing:-0.81px">1</i></span>
<span class="t" style="left:350.8px;top:635.5px;color:#000;letter-spacing:0.05px;">HiCAD<i style="letter-spacing:-0.28px"> </i>Konstruktion</span>
<span class="t" style="left:470.6px;top:635.5px;color:#000;letter-spacing:0.09px;"><i style="letter-spacing:-0.58px">24</i><i style="letter-spacing:-0.24px">.</i><i style="letter-spacing:-0.58px">11</i><i style="letter-spacing:-0.24px">.</i><i style="letter-spacing:-0.58px">2022</i></span>
<span class="t" style="left:545.7px;top:635.5px;color:#000;letter-spacing:0.23px;">Administrator</span>
<span class="t" style="left:630.6px;top:635.5px;color:#000;letter-spacing:0.06px;"><i style="letter-spacing:-0.61px">24</i><i style="letter-spacing:-0.27px">.</i><i style="letter-spacing:-0.61px">11</i><i style="letter-spacing:-0.27px">.</i><i style="letter-spacing:-0.61px">2022</i><i style="letter-spacing:-0.27px"> </i><i style="letter-spacing:-0.61px">10</i><i style="letter-spacing:-0.27px">:</i><i style="letter-spacing:-0.61px">44</i><i style="letter-spacing:-0.27px">:</i><i style="letter-spacing:-0.61px">48</i></span>
<span class="t" style="left:61.8px;top:654.5px;color:#000;letter-spacing:-0.13px;">D<i style="letter-spacing:0.37px">N-</i><i style="letter-spacing:-0.80px">000393</i></span>
<span class="t" style="left:220.6px;top:654.5px;color:#000;letter-spacing:-0.07px;">Pos<i style="letter-spacing:-0.40px">.</i>Nr<i style="letter-spacing:-0.40px">.: </i><i style="letter-spacing:-0.74px">101</i></span>
<span class="t" style="left:350.8px;top:654.5px;color:#000;letter-spacing:0.05px;">HiCAD<i style="letter-spacing:-0.28px"> </i>Konstruktion</span>
<span class="t" style="left:470.6px;top:654.5px;color:#000;letter-spacing:0.09px;"><i style="letter-spacing:-0.58px">24</i><i style="letter-spacing:-0.24px">.</i><i style="letter-spacing:-0.58px">11</i><i style="letter-spacing:-0.24px">.</i><i style="letter-spacing:-0.58px">2022</i></span>
<span class="t" style="left:545.7px;top:654.5px;color:#000;letter-spacing:0.23px;">Administrator</span>
<span class="t" style="left:630.6px;top:654.5px;color:#000;letter-spacing:0.06px;"><i style="letter-spacing:-0.61px">24</i><i style="letter-spacing:-0.27px">.</i><i style="letter-spacing:-0.61px">11</i><i style="letter-spacing:-0.27px">.</i><i style="letter-spacing:-0.61px">2022</i><i style="letter-spacing:-0.27px"> </i><i style="letter-spacing:-0.61px">10</i><i style="letter-spacing:-0.27px">:</i><i style="letter-spacing:-0.61px">44</i><i style="letter-spacing:-0.27px">:</i><i style="letter-spacing:-0.61px">50</i></span>
<span class="t" style="left:61.8px;top:673.5px;color:#000;letter-spacing:-0.13px;">D<i style="letter-spacing:0.37px">N-</i><i style="letter-spacing:-0.80px">000394</i></span>
<span class="t" style="left:220.6px;top:673.5px;color:#000;letter-spacing:0.01px;">Pos<i style="letter-spacing:-0.32px">.</i>Nr<i style="letter-spacing:-0.32px">.: </i><i style="letter-spacing:-0.66px">100</i></span>
<span class="t" style="left:350.8px;top:673.5px;color:#000;letter-spacing:0.05px;">HiCAD<i style="letter-spacing:-0.28px"> </i>Konstruktion</span>
<span class="t" style="left:470.6px;top:673.5px;color:#000;letter-spacing:0.09px;"><i style="letter-spacing:-0.58px">24</i><i style="letter-spacing:-0.24px">.</i><i style="letter-spacing:-0.58px">11</i><i style="letter-spacing:-0.24px">.</i><i style="letter-spacing:-0.58px">2022</i></span>
<span class="t" style="left:545.7px;top:673.5px;color:#000;letter-spacing:0.23px;">Administrator</span>
<span class="t" style="left:630.6px;top:673.5px;color:#000;letter-spacing:0.06px;"><i style="letter-spacing:-0.61px">24</i><i style="letter-spacing:-0.27px">.</i><i style="letter-spacing:-0.61px">11</i><i style="letter-spacing:-0.27px">.</i><i style="letter-spacing:-0.61px">2022</i><i style="letter-spacing:-0.27px"> </i><i style="letter-spacing:-0.61px">10</i><i style="letter-spacing:-0.27px">:</i><i style="letter-spacing:-0.61px">44</i><i style="letter-spacing:-0.27px">:</i><i style="letter-spacing:-0.61px">52</i></span>
<span class="t" style="left:61.8px;top:692.5px;color:#000;letter-spacing:-0.13px;">D<i style="letter-spacing:0.37px">N-</i><i style="letter-spacing:-0.80px">000361</i></span>
<span class="t" style="left:220.6px;top:692.5px;color:#000;letter-spacing:-0.14px;">Pos<i style="letter-spacing:-0.47px">.</i>Nr<i style="letter-spacing:-0.47px">.: </i><i style="letter-spacing:-0.81px">1</i></span>
<span class="t" style="left:350.8px;top:692.5px;color:#000;letter-spacing:0.05px;">HiCAD<i style="letter-spacing:-0.28px"> </i>Konstruktion</span>
<span class="t" style="left:470.6px;top:692.5px;color:#000;letter-spacing:0.09px;"><i style="letter-spacing:-0.58px">24</i><i style="letter-spacing:-0.24px">.</i><i style="letter-spacing:-0.58px">11</i><i style="letter-spacing:-0.24px">.</i><i style="letter-spacing:-0.58px">2022</i></span>
<span class="t" style="left:545.7px;top:692.5px;color:#000;letter-spacing:0.23px;">Administrator</span>
<span class="t" style="left:630.6px;top:692.5px;color:#000;letter-spacing:0.11px;"><i style="letter-spacing:-0.56px">24</i><i style="letter-spacing:-0.22px">.</i><i style="letter-spacing:-0.56px">11</i><i style="letter-spacing:-0.22px">.</i><i style="letter-spacing:-0.56px">2022</i><i style="letter-spacing:-0.22px"> </i><i style="letter-spacing:-0.56px">11</i><i style="letter-spacing:-0.22px">:</i><i style="letter-spacing:-0.56px">12</i><i style="letter-spacing:-0.22px">:</i><i style="letter-spacing:-0.56px">44</i></span>
<span class="t" style="left:61.8px;top:711.5px;color:#000;letter-spacing:-0.13px;">D<i style="letter-spacing:0.37px">N-</i><i style="letter-spacing:-0.80px">000395</i></span>
<span class="t" style="left:220.6px;top:711.5px;color:#000;letter-spacing:0.01px;">Pos<i style="letter-spacing:-0.32px">.</i>Nr<i style="letter-spacing:-0.32px">.: </i><i style="letter-spacing:-0.66px">100</i></span>
<span class="t" style="left:350.8px;top:711.5px;color:#000;letter-spacing:0.05px;">HiCAD<i style="letter-spacing:-0.28px"> </i>Konstruktion</span>
<span class="t" style="left:470.6px;top:711.5px;color:#000;letter-spacing:0.09px;"><i style="letter-spacing:-0.58px">24</i><i style="letter-spacing:-0.24px">.</i><i style="letter-spacing:-0.58px">11</i><i style="letter-spacing:-0.24px">.</i><i style="letter-spacing:-0.58px">2022</i></span>
<span class="t" style="left:545.7px;top:711.5px;color:#000;letter-spacing:0.23px;">Administrator</span>
<span class="t" style="left:630.6px;top:711.5px;color:#000;letter-spacing:0.11px;"><i style="letter-spacing:-0.56px">24</i><i style="letter-spacing:-0.22px">.</i><i style="letter-spacing:-0.56px">11</i><i style="letter-spacing:-0.22px">.</i><i style="letter-spacing:-0.56px">2022</i><i style="letter-spacing:-0.22px"> </i><i style="letter-spacing:-0.56px">11</i><i style="letter-spacing:-0.22px">:</i><i style="letter-spacing:-0.56px">12</i><i style="letter-spacing:-0.22px">:</i><i style="letter-spacing:-0.56px">44</i></span>
<span class="t" style="left:61.8px;top:730.5px;color:#000;letter-spacing:-0.13px;">D<i style="letter-spacing:0.37px">N-</i><i style="letter-spacing:-0.80px">000396</i></span>
<span class="t" style="left:220.6px;top:730.5px;color:#000;letter-spacing:-0.07px;">Pos<i style="letter-spacing:-0.40px">.</i>Nr<i style="letter-spacing:-0.40px">.: </i><i style="letter-spacing:-0.74px">101</i></span>
<span class="t" style="left:350.8px;top:730.5px;color:#000;letter-spacing:0.05px;">HiCAD<i style="letter-spacing:-0.28px"> </i>Konstruktion</span>
<span class="t" style="left:470.6px;top:730.5px;color:#000;letter-spacing:0.09px;"><i style="letter-spacing:-0.58px">24</i><i style="letter-spacing:-0.24px">.</i><i style="letter-spacing:-0.58px">11</i><i style="letter-spacing:-0.24px">.</i><i style="letter-spacing:-0.58px">2022</i></span>
<span class="t" style="left:545.7px;top:730.5px;color:#000;letter-spacing:0.23px;">Administrator</span>
<span class="t" style="left:630.6px;top:730.5px;color:#000;letter-spacing:0.11px;"><i style="letter-spacing:-0.56px">24</i><i style="letter-spacing:-0.22px">.</i><i style="letter-spacing:-0.56px">11</i><i style="letter-spacing:-0.22px">.</i><i style="letter-spacing:-0.56px">2022</i><i style="letter-spacing:-0.22px"> </i><i style="letter-spacing:-0.56px">11</i><i style="letter-spacing:-0.22px">:</i><i style="letter-spacing:-0.56px">12</i><i style="letter-spacing:-0.22px">:</i><i style="letter-spacing:-0.56px">44</i></span>
</body></html>
